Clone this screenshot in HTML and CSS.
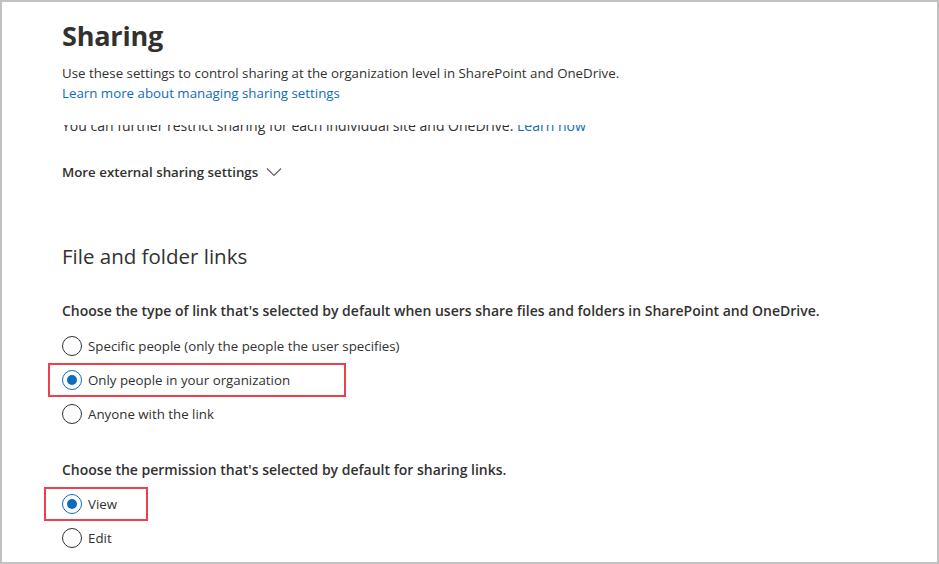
FILE: index.html
```html
<!DOCTYPE html>
<html lang="en">
<head>
  <meta charset="UTF-8" />
  <meta name="viewport" content="width=device-width, initial-scale=1.0"/>
  <title>Sharing</title>
  <link rel="stylesheet" href="styles.css">
</head>
<body>
  <div class="frame">
    <div class="page">
      <h1>Sharing</h1>
      <p class="intro">Use these settings to control sharing at the organization level in SharePoint and OneDrive.</p>
      <p class="intro tight"><a class="link" href="#">Learn more about managing sharing settings</a></p>

      <div class="clipped">
        <p>You can further restrict sharing for each individual site and OneDrive. <a class="link" href="#">Learn now</a></p>
      </div>

      <button class="expander" type="button">
        More external sharing settings
        <svg width="16" height="10" viewBox="0 0 16 10"><path d="M1 1.5 L8 8.5 L15 1.5" fill="none" stroke="#605e5c" stroke-width="1.1"/></svg>
      </button>

      <h2>File and folder links</h2>

      <p class="question">Choose the type of link that's selected by default when users share files and folders in SharePoint and OneDrive.</p>
      <div class="options">
        <label class="option"><span class="radio"></span>Specific people (only the people the user specifies)</label>
        <label class="option marked wide"><span class="radio checked"></span>Only people in your organization</label>
        <label class="option"><span class="radio"></span>Anyone with the link</label>
      </div>

      <p class="question second">Choose the permission that's selected by default for sharing links.</p>
      <div class="options second">
        <label class="option marked narrow"><span class="radio checked"></span>View</label>
        <label class="option"><span class="radio"></span>Edit</label>
      </div>
    </div>
  </div>
</body>
</html>
```

FILE: styles.css
```css
body {
  margin: 0;
  font-family: "Open Sans", "Noto Sans", sans-serif;
  color: #323130;
  background: #fff;
}
.frame {
  width: 939px;
  height: 564px;
  box-sizing: border-box;
  border: 2px solid #c1c1c1;
  overflow: hidden;
}
.page {
  padding: 14px 0 0 60px;
  font-size: 13.3px;
  line-height: 20px;
}
h1 {
  margin: 0;
  font-size: 27px;
  font-weight: 700;
  line-height: 40px;
  letter-spacing: -0.2px;
}
.intro {
  margin: 7px 0 0;
}
.intro.tight {
  margin-top: 0;
}
.link {
  color: #0f6cbd;
  text-decoration: none;
}
/* the line above the expander is cut off at the top in the original */
.clipped {
  display: flow-root;
  height: 11px;
  margin-top: 22px;
  overflow: hidden;
}
.clipped p {
  margin: -9px 0 0;
  font-size: 14px;
}
.expander {
  display: flex;
  align-items: center;
  gap: 8px;
  margin-top: 26px;
  padding: 0;
  border: none;
  background: none;
  font-family: inherit;
  font-size: 13.3px;
  font-weight: 600;
  color: #323130;
  line-height: 20px;
}
h2 {
  margin: 60px 0 0;
  font-size: 20.5px;
  font-weight: 500;
  line-height: 28px;
}
.question {
  margin: 31px 0 0;
  font-size: 14px;
  font-weight: 600;
}
.question.second {
  margin-top: 29px;
}
.options {
  display: flex;
  flex-direction: column;
  margin-top: 8px;
}
.options.second {
  margin-top: 7px;
}
.option {
  display: flex;
  align-items: center;
  gap: 6px;
  height: 34px;
}
.radio {
  width: 20px;
  height: 20px;
  box-sizing: border-box;
  border: 1px solid #323130;
  border-radius: 50%;
  display: flex;
  align-items: center;
  justify-content: center;
}
.radio.checked {
  border-color: #0f6cbd;
}
.radio.checked::after {
  content: "";
  width: 10px;
  height: 10px;
  border-radius: 50%;
  background: #0f6cbd;
}
.marked {
  align-self: flex-start;
  border: 2px solid #ee3f4a;
  box-sizing: border-box;
}
.wide {
  width: 298px;
  margin-left: -14px;
  padding-left: 12px;
}
.narrow {
  width: 104px;
  margin-left: -18px;
  padding-left: 16px;
}
```
